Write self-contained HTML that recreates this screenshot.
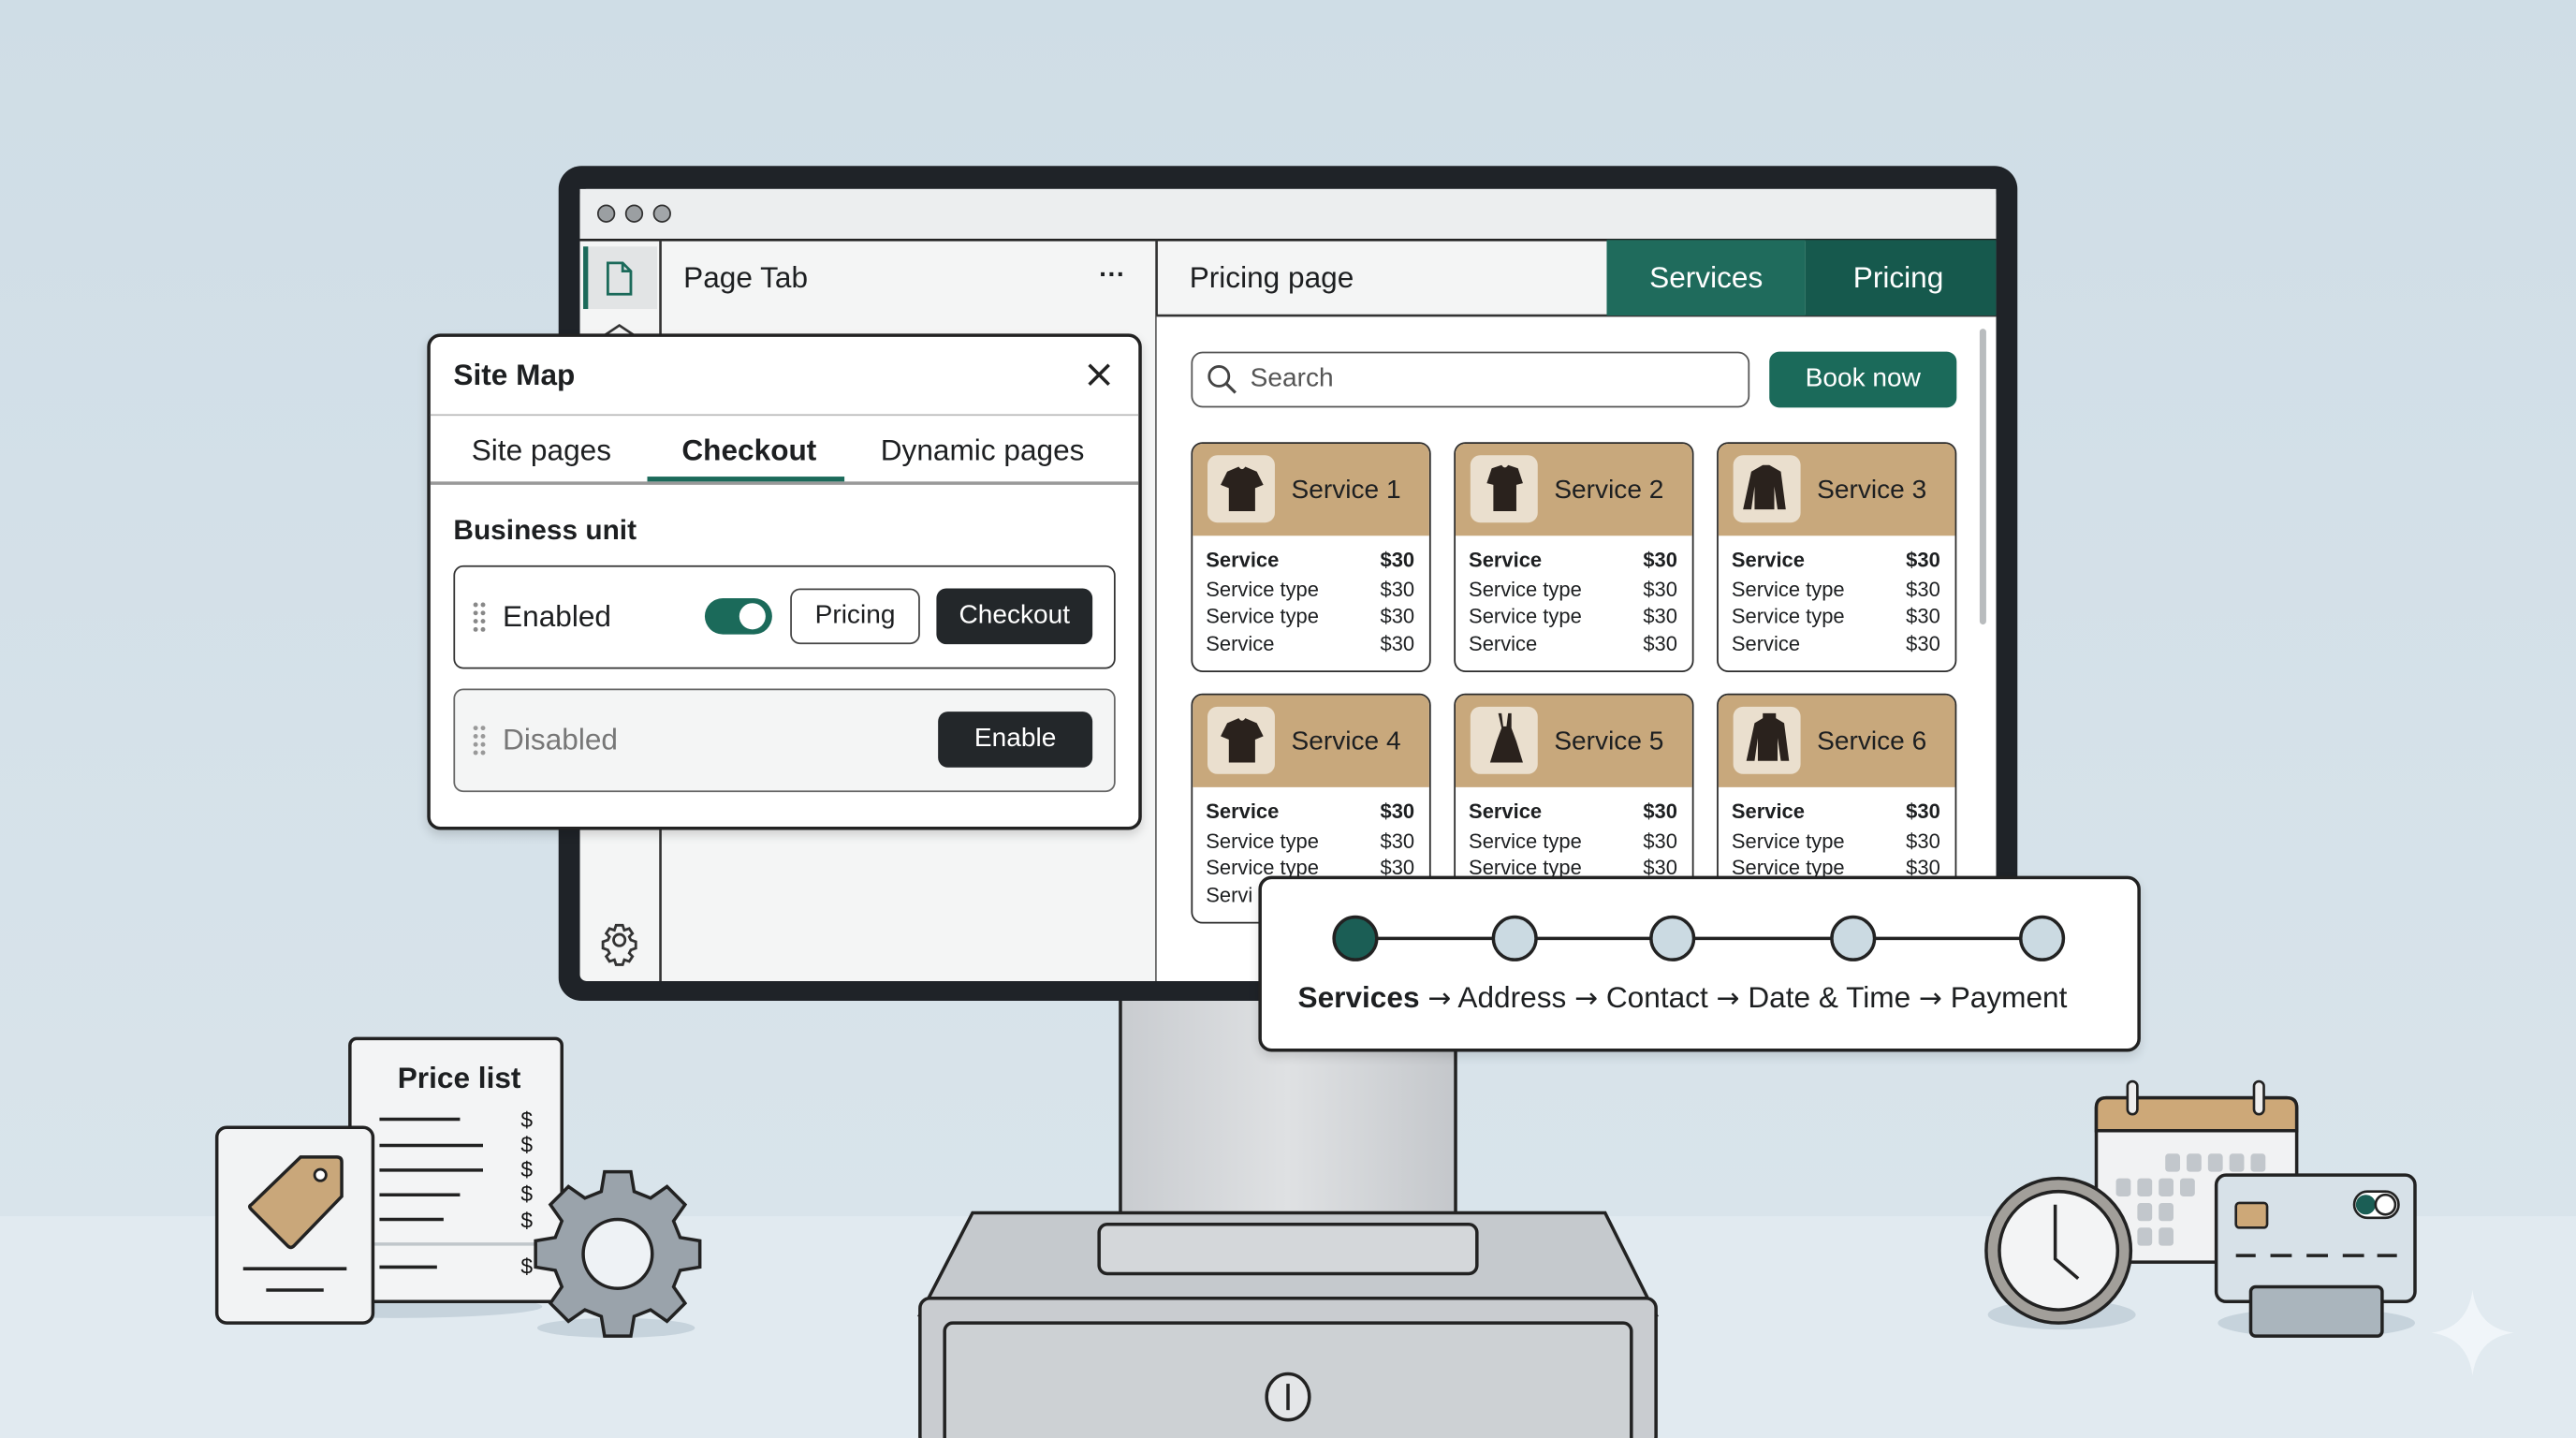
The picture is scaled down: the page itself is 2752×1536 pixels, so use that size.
<!DOCTYPE html>
<html><head><meta charset="utf-8"><style>
*{margin:0;padding:0;box-sizing:border-box}
html,body{width:2752px;height:1536px;overflow:hidden;background:#d3e0e8}
#w{position:absolute;left:0;top:0;width:1568px;height:875px;transform:scale(1.75510,1.75543);transform-origin:0 0;font-family:"Liberation Sans",sans-serif;color:#1d1f21}
.a{position:absolute}
.t{position:absolute;white-space:nowrap;line-height:1}
.card{position:absolute;width:146px;height:140px;border:1.5px solid #2a2a2a;border-radius:7px;background:#fff;overflow:hidden}
.card .h{height:56px;background:#c8a87c;position:relative}
.card .ib{position:absolute;left:9px;top:7px;width:41px;height:41px;background:#eadfce;border-radius:6px}
.card .nm{position:absolute;left:60px;top:20px;font-size:16px}
.btn{position:absolute;border-radius:6px;display:flex;align-items:center;justify-content:center;font-size:16px}
.ar{font-family:"DejaVu Sans",sans-serif;font-size:17px}
</style></head><body><div id="w">
<svg class="a" width="1568" height="875" viewBox="0 0 1568 875" style="left:0;top:0">
<defs>
<linearGradient id="bg" x1="0" y1="0" x2="0" y2="1"><stop offset="0" stop-color="#cfdde6"/><stop offset="1" stop-color="#d9e4eb"/></linearGradient>
<linearGradient id="sil" x1="0" y1="0" x2="1" y2="0"><stop offset="0" stop-color="#c9ccd0"/><stop offset=".5" stop-color="#dfe1e3"/><stop offset="1" stop-color="#c4c7cb"/></linearGradient>
</defs>
<rect width="1568" height="742" fill="url(#bg)"/>
<rect y="740" width="1568" height="135" fill="#e1eaf0"/>
<path d="M740 612 Q745 648 784 648 Q820 648 826 612Z" fill="#cfd2d5" stroke="#222" stroke-width="2"/>
<rect x="682" y="605" width="204" height="160" fill="url(#sil)" stroke="#222" stroke-width="2"/>
<path d="M592 738 L977 738 L1008 800 L560 800Z" fill="#c5c9cd" stroke="#222" stroke-width="2"/>
<rect x="669" y="745" width="230" height="30" rx="5" fill="#d4d7da" stroke="#222" stroke-width="2"/>
<rect x="560" y="790" width="448" height="90" rx="6" fill="#c9ccd0" stroke="#222" stroke-width="2"/>
<rect x="575" y="805" width="418" height="80" rx="5" fill="#cdd1d4" stroke="#222" stroke-width="2"/>
<ellipse cx="784" cy="850" rx="13" ry="14" fill="#e4e6e8" stroke="#222" stroke-width="2"/>
<line x1="784" y1="842" x2="784" y2="858" stroke="#222" stroke-width="2"/>
<rect x="340" y="101" width="888" height="508" rx="14" fill="#1f2328"/>
<rect x="353" y="115" width="862" height="482" rx="4" fill="#f4f5f5"/>
<rect x="353" y="115" width="862" height="31" fill="#eceeef"/>
<line x1="353" y1="146" x2="1215" y2="146" stroke="#222" stroke-width="1.5"/>
<circle cx="369" cy="130" r="5" fill="#9b9fa2" stroke="#333"/><circle cx="386" cy="130" r="5" fill="#9b9fa2" stroke="#333"/><circle cx="403" cy="130" r="5" fill="#a2a6a9" stroke="#333"/>
<rect x="355" y="150" width="45" height="38" fill="#e2e4e5"/><rect x="355" y="150" width="3" height="38" fill="#1b6a5a"/>
<path d="M370 160 h9 l5 5 v14 h-14z M379 160 v5 h5" fill="none" stroke="#1b6a5a" stroke-width="1.6"/>
<path d="M368 204 l9 -6 l9 6" fill="none" stroke="#333" stroke-width="1.5"/>
<line x1="402" y1="146" x2="402" y2="597" stroke="#333" stroke-width="1.5"/>
<line x1="704" y1="146" x2="704" y2="597" stroke="#333" stroke-width="1.5"/>
<rect x="704" y="192" width="511" height="405" fill="#fff"/>
<line x1="704" y1="192" x2="1215" y2="192" stroke="#333" stroke-width="1.5"/>
<rect x="978" y="146" width="121" height="46" fill="#1f6b5c"/><rect x="1099" y="146" width="116" height="46" fill="#16594d"/>
<rect x="1205" y="200" width="4" height="180" rx="2" fill="#b9bcbe"/>
<g transform="translate(377 572)" fill="none" stroke="#333" stroke-width="1.6"><circle r="3.5"/><path d="M-2 -9 h4 l1 3 l3 -1 l2 3 l-2 2 l1 2 l3 1 v4 l-3 1 l-1 2 l2 2 l-2 3 l-3 -1 l-1 3 h-4 l-1 -3 l-3 1 l-2 -3 l2 -2 l-1 -2 l-3 -1 v-4 l3 -1 l1 -2 l-2 -2 l2 -3 l3 1z"/></g>
<ellipse cx="240" cy="795" rx="90" ry="7" fill="#c6d3dc"/>
<rect x="213" y="632" width="129" height="160" rx="4" fill="#f3f4f5" stroke="#222" stroke-width="2"/>
<g stroke="#222" stroke-width="2"><line x1="231" y1="681" x2="280" y2="681"/><line x1="231" y1="697" x2="294" y2="697"/><line x1="231" y1="712" x2="294" y2="712"/><line x1="231" y1="727" x2="280" y2="727"/><line x1="231" y1="742" x2="270" y2="742"/><line x1="231" y1="771" x2="266" y2="771"/></g>
<line x1="228" y1="757" x2="340" y2="757" stroke="#c0c6cb" stroke-width="2"/>
<g font-size="13" font-family="Liberation Sans" fill="#111"><text x="317" y="686">$</text><text x="317" y="701">$</text><text x="317" y="716">$</text><text x="317" y="731">$</text><text x="317" y="747">$</text><text x="317" y="775">$</text></g>
<rect x="132" y="686" width="95" height="119" rx="6" fill="#f2f3f4" stroke="#222" stroke-width="2"/>
<path d="M153 733 L183 704 L205 704 Q208 704 208 707 L208 728 L179 758 Q177 760 175 758 L153 736 Q151 734 153 733Z" fill="#c9a77a" stroke="#222" stroke-width="2"/>
<circle cx="195" cy="715" r="3.5" fill="#fff" stroke="#222" stroke-width="1.6"/>
<line x1="148" y1="772" x2="211" y2="772" stroke="#222" stroke-width="2"/><line x1="162" y1="785" x2="197" y2="785" stroke="#222" stroke-width="2"/>
<ellipse cx="375" cy="808" rx="48" ry="6" fill="#c6d3dc"/>
<g transform="translate(376 763)" fill="#9aa3ab" stroke="#222" stroke-width="2">
<path d="M-8 -50 h16 l2 12 l10 4 l10 -7 l11 11 l-7 10 l4 10 l12 2 v16 l-12 2 l-4 10 l7 10 l-11 11 l-10 -7 l-10 4 l-2 12 h-16 l-2 -12 l-10 -4 l-10 7 l-11 -11 l7 -10 l-4 -10 l-12 -2 v-16 l12 -2 l4 -10 l-7 -10 l11 -11 l10 7 l10 -4z"/>
<circle r="21" fill="#eef2f5"/></g>
<rect x="1276" y="668" width="122" height="100" rx="6" fill="#f1f2f3" stroke="#222" stroke-width="2"/>
<path d="M1276 688 v-14 q0 -6 6 -6 h110 q6 0 6 6 v14z" fill="#cda878" stroke="#222" stroke-width="2"/>
<rect x="1295" y="658" width="6" height="20" rx="3" fill="#eee" stroke="#222" stroke-width="1.5"/><rect x="1372" y="658" width="6" height="20" rx="3" fill="#eee" stroke="#222" stroke-width="1.5"/>
<g fill="#c2c7cc"><rect x="1318" y="702" width="9" height="11" rx="2"/><rect x="1331" y="702" width="9" height="11" rx="2"/><rect x="1344" y="702" width="9" height="11" rx="2"/><rect x="1357" y="702" width="9" height="11" rx="2"/><rect x="1370" y="702" width="9" height="11" rx="2"/>
<rect x="1288" y="717" width="9" height="11" rx="2"/><rect x="1301" y="717" width="9" height="11" rx="2"/><rect x="1314" y="717" width="9" height="11" rx="2"/><rect x="1327" y="717" width="9" height="11" rx="2"/>
<rect x="1301" y="732" width="9" height="11" rx="2"/><rect x="1314" y="732" width="9" height="11" rx="2"/><rect x="1301" y="747" width="9" height="11" rx="2"/><rect x="1314" y="747" width="9" height="11" rx="2"/></g>
<ellipse cx="1255" cy="800" rx="45" ry="9" fill="#c6d3dc"/>
<circle cx="1253" cy="761" r="44" fill="#a29f9a" stroke="#222" stroke-width="2"/>
<circle cx="1253" cy="761" r="36" fill="#f3f4f5" stroke="#222" stroke-width="2"/>
<path d="M1251 733 V766 L1265 778" fill="none" stroke="#222" stroke-width="2"/>
<ellipse cx="1410" cy="805" rx="60" ry="9" fill="#c6d3dc"/>
<rect x="1349" y="715" width="121" height="77" rx="6" fill="#d7e1e8" stroke="#222" stroke-width="2"/>
<rect x="1361" y="732" width="19" height="15" rx="2" fill="#cda878" stroke="#222" stroke-width="1.5"/>
<rect x="1433" y="725" width="27" height="16" rx="8" fill="#fff" stroke="#222" stroke-width="1.5"/><circle cx="1440" cy="733" r="6" fill="#1b5e55"/><circle cx="1452" cy="733" r="6" fill="#fff" stroke="#222" stroke-width="1.5"/>
<path d="M1361 764 h12 M1382 764 h13 M1404 764 h13 M1426 764 h13 M1447 764 h12" stroke="#222" stroke-width="2"/>
<rect x="1370" y="783" width="80" height="30" rx="3" fill="#aab5bd" stroke="#222" stroke-width="2"/>
<path d="M1505 785 Q1508 808 1530 811 Q1508 814 1505 837 Q1502 814 1480 811 Q1502 808 1505 785Z" fill="#f2f6f9" opacity=".9"/>
</svg>

<div class="t" style="left:416px;top:160px;font-size:18px">Page Tab</div>
<div class="t" style="left:669px;top:160px;font-size:16px;font-weight:bold">···</div>
<div class="t" style="left:724px;top:160px;font-size:18px">Pricing page</div>
<div class="t" style="left:1004px;top:160px;font-size:18px;color:#fff">Services</div>
<div class="t" style="left:1128px;top:160px;font-size:18px;color:#fff">Pricing</div>
<div class="a" style="left:725px;top:214px;width:340px;height:34px;border:1.5px solid #555;border-radius:7px;background:#fff"></div>
<svg class="a" style="left:734px;top:221px" width="20" height="20"><circle cx="8" cy="8" r="6" fill="none" stroke="#444" stroke-width="1.6"/><line x1="12.5" y1="12.5" x2="18" y2="18" stroke="#444" stroke-width="1.8"/></svg>
<div class="t" style="left:761px;top:223px;font-size:16px;color:#555">Search</div>
<div class="btn" style="left:1077px;top:214px;width:114px;height:34px;background:#1b6a5a;color:#fff">Book now</div>

<div class="card" style="left:725px;top:269px"><div class="h"><div class="ib"></div><div class="nm">Service 1</div></div></div>
<div class="card" style="left:885px;top:269px"><div class="h"><div class="ib"></div><div class="nm">Service 2</div></div></div>
<div class="card" style="left:1045px;top:269px"><div class="h"><div class="ib"></div><div class="nm">Service 3</div></div></div>
<div class="card" style="left:725px;top:422px"><div class="h"><div class="ib"></div><div class="nm">Service 4</div></div></div>
<div class="card" style="left:885px;top:422px"><div class="h"><div class="ib"></div><div class="nm">Service 5</div></div></div>
<div class="card" style="left:1045px;top:422px"><div class="h"><div class="ib"></div><div class="nm">Service 6</div></div></div>
<div id="rows"></div>
<svg class="a" style="left:0;top:0" width="1568" height="875" fill="#2a221d">
<path d="M747 287 l7 -3 q2 3 4 0 l7 3 l4 8 l-5 2 v14 h-16 v-14 l-5 -2z"/>
<path d="M908 285 l6 -2 q2 3 4 0 l6 2 l3 9 l-4 1 v16 h-14 v-16 l-4 -1z"/>
<path d="M1066 287 l7 -4 h4 l7 4 l3 23 h-5 l-2 -14 v14 h-12 v-14 l-2 14 h-5z"/>
<path d="M747 440 l7 -3 q2 3 4 0 l7 3 l4 8 l-5 2 v14 h-16 v-14 l-5 -2z"/>
<path d="M912 434 h2 l1 8 h2 l1 -8 h2 l0 9 l3 8 l4 13 h-20 l4 -13 l3 -8z"/>
<path d="M1068 440 l5 -3 v-3 h8 v3 l5 3 l3 23 h-5 l-2 -14 v14 h-12 v-14 l-2 14 h-5z"/>
</svg>

<div class="a" style="left:260px;top:203px;width:435px;height:302px;background:#fff;border:2px solid #222;border-radius:8px;box-shadow:0 3px 6px rgba(0,0,0,.15)"></div>
<div class="t" style="left:276px;top:219px;font-size:18px;font-weight:bold">Site Map</div>
<svg class="a" style="left:662px;top:221px" width="14" height="14"><path d="M1 1L13 13M13 1L1 13" stroke="#222" stroke-width="2"/></svg>
<div class="a" style="left:262px;top:252px;width:431px;height:1px;background:#bbb"></div>
<div class="t" style="left:287px;top:265px;font-size:18px">Site pages</div>
<div class="t" style="left:415px;top:265px;font-size:18px;font-weight:bold">Checkout</div>
<div class="t" style="left:536px;top:265px;font-size:18px">Dynamic pages</div>
<div class="a" style="left:262px;top:293px;width:431px;height:1.5px;background:#999"></div>
<div class="a" style="left:394px;top:290px;width:120px;height:3px;background:#1b6a5a"></div>
<div class="t" style="left:276px;top:314px;font-size:17px;font-weight:bold">Business unit</div>
<div class="a" style="left:276px;top:344px;width:403px;height:63px;border:1.5px solid #333;border-radius:6px"></div>
<svg class="a" style="left:287px;top:366px" width="10" height="20" fill="#888"><circle cx="2.5" cy="2" r="1.4"/><circle cx="7" cy="2" r="1.4"/><circle cx="2.5" cy="7" r="1.4"/><circle cx="7" cy="7" r="1.4"/><circle cx="2.5" cy="12" r="1.4"/><circle cx="7" cy="12" r="1.4"/><circle cx="2.5" cy="17" r="1.4"/><circle cx="7" cy="17" r="1.4"/></svg>
<div class="t" style="left:306px;top:366px;font-size:18px">Enabled</div>
<div class="a" style="left:429px;top:364px;width:41px;height:22px;background:#1b6a5a;border-radius:11px"><div class="a" style="left:21px;top:3px;width:16px;height:16px;background:#fff;border-radius:8px"></div></div>
<div class="btn" style="left:481px;top:358px;width:79px;height:34px;border:1.5px solid #444;background:#fff">Pricing</div>
<div class="btn" style="left:570px;top:358px;width:95px;height:34px;background:#23272a;color:#fff">Checkout</div>
<div class="a" style="left:276px;top:419px;width:403px;height:63px;border:1.5px solid #666;border-radius:6px;background:#f4f5f5"></div>
<svg class="a" style="left:287px;top:441px" width="10" height="20" fill="#999"><circle cx="2.5" cy="2" r="1.4"/><circle cx="7" cy="2" r="1.4"/><circle cx="2.5" cy="7" r="1.4"/><circle cx="7" cy="7" r="1.4"/><circle cx="2.5" cy="12" r="1.4"/><circle cx="7" cy="12" r="1.4"/><circle cx="2.5" cy="17" r="1.4"/><circle cx="7" cy="17" r="1.4"/></svg>
<div class="t" style="left:306px;top:441px;font-size:18px;color:#777">Disabled</div>
<div class="btn" style="left:571px;top:433px;width:94px;height:34px;background:#23272a;color:#fff">Enable</div>

<div class="a" style="left:766px;top:533px;width:537px;height:107px;background:#fff;border:2px solid #222;border-radius:8px;box-shadow:0 3px 6px rgba(0,0,0,.12)"></div>
<svg class="a" style="left:766px;top:533px" width="537" height="107"><line x1="59" y1="38" x2="477" y2="38" stroke="#222" stroke-width="2"/>
<circle cx="59" cy="38" r="13" fill="#1b5e55" stroke="#222" stroke-width="2"/><circle cx="156" cy="38" r="13" fill="#cbdae2" stroke="#222" stroke-width="2"/><circle cx="252" cy="38" r="13" fill="#cbdae2" stroke="#222" stroke-width="2"/><circle cx="362" cy="38" r="13" fill="#cbdae2" stroke="#222" stroke-width="2"/><circle cx="477" cy="38" r="13" fill="#cbdae2" stroke="#222" stroke-width="2"/></svg>
<div class="t" style="left:790px;top:598px;font-size:18px"><b>Services</b> <span class="ar">→</span> Address <span class="ar">→</span> Contact <span class="ar">→</span> Date &amp; Time <span class="ar">→</span> Payment</div>
<div class="t" style="left:242px;top:647px;font-size:18px;font-weight:bold">Price list</div>
</div>
<script>
var cs=[[725,269],[885,269],[1045,269],[725,422],[885,422],[1045,422]],h='';
cs.forEach(function(c,i){var L=[['Service',1],['Service type',0],['Service type',0],['Service',0]];var ys=[73,91,107,124];
L.forEach(function(l,j){if(i==3&&j==3){h+='<div class="t" style="left:'+(c[0]+9)+'px;top:'+(c[1]+ys[j]-7)+'px;font-size:12.5px">Servi</div>';return;}
if(i>3&&j==3)return;
h+='<div class="t" style="left:'+(c[0]+9)+'px;top:'+(c[1]+ys[j]-7)+'px;font-size:12.5px;'+(l[1]?'font-weight:bold':'')+'">'+l[0]+'</div><div class="t" style="left:'+(c[0]+111)+'px;top:'+(c[1]+ys[j]-7)+'px;width:25px;text-align:right;font-size:12.5px;'+(l[1]?'font-weight:bold':'')+'">$30</div>';});});
document.getElementById('rows').innerHTML=h;
</script>
</body></html>
